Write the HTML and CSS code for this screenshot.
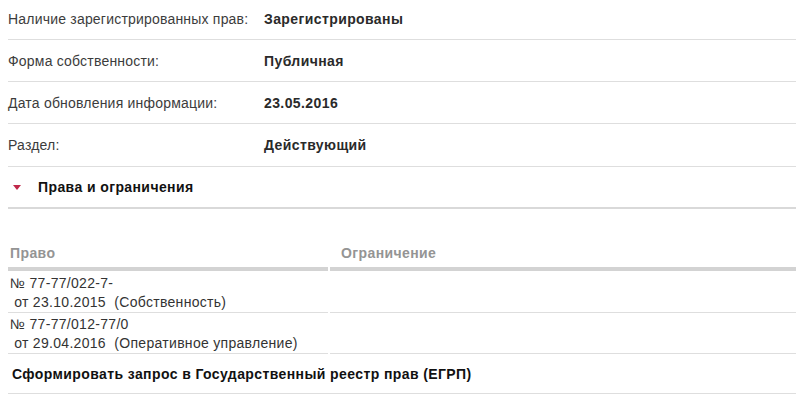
FILE: index.html
```html
<!DOCTYPE html>
<html lang="ru">
<head>
<meta charset="utf-8">
<link rel="stylesheet" href="styles.css">
</head>
<body>
<div class="page">
  <div class="info-row"><span class="label">Наличие зарегистрированных прав:</span><span class="value">Зарегистрированы</span></div>
  <div class="info-row"><span class="label">Форма собственности:</span><span class="value">Публичная</span></div>
  <div class="info-row"><span class="label">Дата обновления информации:</span><span class="value">23.05.2016</span></div>
  <div class="info-row"><span class="label">Раздел:</span><span class="value">Действующий</span></div>
  <div class="section-head"><span class="caret"></span><span class="section-title">Права и ограничения</span></div>
  <div class="rights">
    <div class="rights-head rh-left">Право</div>
    <div class="rights-head rh-right">Ограничение</div>
    <div class="cell cell-left cell-first">№ 77-77/022-7-<br>&nbsp;от 23.10.2015&nbsp; (Собственность)</div>
    <div class="cell cell-right cell-first"></div>
    <div class="cell cell-left">№ 77-77/012-77/0<br>&nbsp;от 29.04.2016&nbsp; (Оперативное управление)</div>
    <div class="cell cell-right"></div>
  </div>
  <div class="request-row">Сформировать запрос в Государственный реестр прав (ЕГРП)</div>
</div>
</body>
</html>
```
FILE: styles.css
```css
html, body {
  margin: 0;
  padding: 0;
  background: #fff;
}
body {
  font-family: "Liberation Sans", Arial, sans-serif;
  font-size: 14px;
  color: #333;
  letter-spacing: 0.25px;
  overflow: hidden;
}
.page {
  margin-top: -2px;
  padding-left: 8px;
}
.info-row {
  display: grid;
  grid-template-columns: 256px 1fr;
  align-items: center;
  height: 41px;
  border-bottom: 1px solid #dedede;
}
.info-row:nth-child(4) {
  height: 42px;
}
.label {
  color: #3c3c3c;
  letter-spacing: 0.2px;
}
.value {
  font-weight: bold;
  color: #2a2a2a;
  letter-spacing: 0.4px;
}
.section-head {
  display: flex;
  align-items: center;
  height: 40px;
  border-bottom: 2px solid #d9d9d9;
}
.caret {
  width: 0;
  height: 0;
  margin-left: 5px;
  margin-right: 17px;
  border-left: 4px solid transparent;
  border-right: 4px solid transparent;
  border-top: 5px solid #c0284a;
}
.section-title {
  font-weight: bold;
  color: #111;
  letter-spacing: 0.4px;
}
.rights {
  display: grid;
  grid-template-columns: 320px 1fr;
  column-gap: 2px;
  padding-top: 35px;
}
.rights-head {
  font-weight: bold;
  color: #949494;
  line-height: 18px;
  letter-spacing: 0.4px;
  padding-bottom: 5px;
  border-bottom: 4px solid #d3d3d3;
}
.rh-left {
  padding-left: 2px;
}
.rh-right {
  padding-left: 11px;
}
.cell {
  line-height: 19px;
  padding: 2px 0 0 2px;
  border-bottom: 1px solid #dedede;
  color: #333;
  letter-spacing: 0.3px;
}
.cell-first {
  padding-top: 3px;
}
.request-row {
  display: flex;
  align-items: center;
  height: 39px;
  padding-left: 4px;
  font-weight: bold;
  color: #111;
  letter-spacing: 0.4px;
  border-bottom: 1px solid #dedede;
}
```
